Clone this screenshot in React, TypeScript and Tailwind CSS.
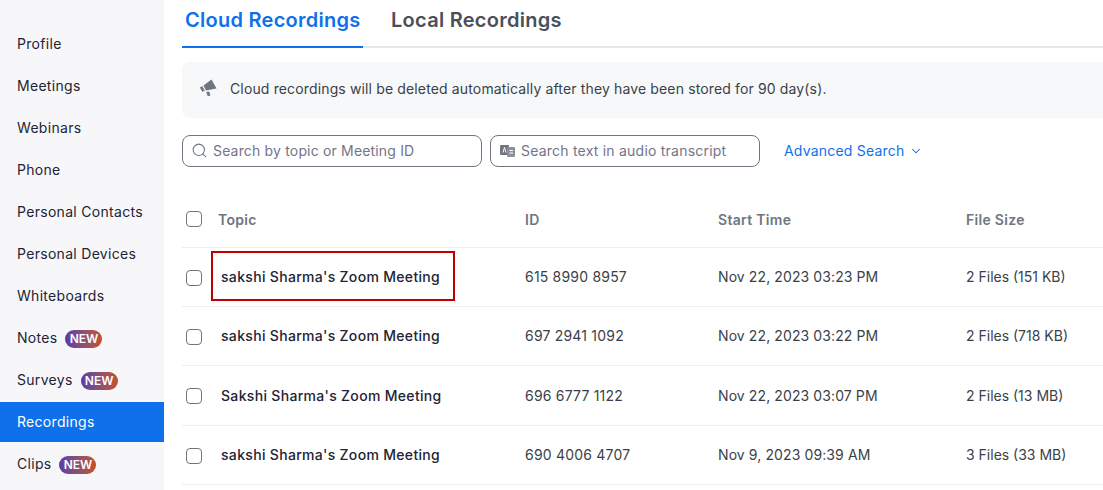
import React from "react";
import { Search, ChevronDown } from "lucide-react";

const nav: [string, boolean][] = [
  ["Profile", false],
  ["Meetings", false],
  ["Webinars", false],
  ["Phone", false],
  ["Personal Contacts", false],
  ["Personal Devices", false],
  ["Whiteboards", false],
  ["Notes", true],
  ["Surveys", true],
  ["Recordings", false],
  ["Clips", true],
];

const rows = [
  { t: "sakshi Sharma's Zoom Meeting", id: "615 8990 8957", s: "Nov 22, 2023 03:23 PM", f: "2 Files (151 KB)", h: "h-[59px]", mark: true },
  { t: "sakshi Sharma's Zoom Meeting", id: "697 2941 1092", s: "Nov 22, 2023 03:22 PM", f: "2 Files (718 KB)", h: "h-[59px]", mark: false },
  { t: "Sakshi Sharma's Zoom Meeting", id: "696 6777 1122", s: "Nov 22, 2023 03:07 PM", f: "2 Files (13 MB)", h: "h-[60px]", mark: false },
  { t: "sakshi Sharma's Zoom Meeting", id: "690 4006 4707", s: "Nov 9, 2023 09:39 AM", f: "3 Files (33 MB)", h: "h-[59px]", mark: false },
];

function Box() {
  return <span className="block w-[16px] h-[16px] rounded-[4px] border border-[#6e7680] bg-white" />;
}

export default function App() {
  return (
    <div className="flex w-[1103px] h-[490px] overflow-hidden bg-white font-['Inter',sans-serif] text-[14px] text-[#232333]">
      <aside className="w-[164px] shrink-0 bg-[#f7f7fa] pt-[24px] flex flex-col gap-[2px]">
        {nav.map(([label, isNew]) => (
          <div
            key={label}
            className={
              "h-[40px] shrink-0 flex items-center pl-[17px] pb-[1px] gap-[8px] " +
              (label === "Recordings" ? "bg-[#0e71eb] text-white" : "text-[#232333]")
            }
          >
            <span className="tracking-[0.3px]">{label}</span>
            {isNew && (
              <span className="mt-[2px] h-[18px] w-[37px] rounded-full bg-gradient-to-r from-[#5b3aa8] to-[#c4501b] text-white text-[12px] font-semibold flex items-center justify-center">
                NEW
              </span>
            )}
          </div>
        ))}
      </aside>

      <main className="relative flex-1 min-w-0 pl-[18px]">
        <div className="h-[48px] flex border-b-2 border-[#e4e7ec] w-[1000px] tracking-[0.27px]">
          <div className="h-[48px] w-[181px] border-b-2 border-[#0e71eb] pl-[3px] pt-[6px] text-[20px] leading-[28px] font-semibold text-[#0e71eb]">
            Cloud Recordings
          </div>
          <div className="pl-[28px] pt-[6px] text-[20px] leading-[28px] font-semibold text-[#4a4f5a]">
            Local Recordings
          </div>
        </div>

        <div className="mt-[14px] h-[56px] w-[1000px] rounded-[8px] bg-[#f7f8fa] flex items-center pl-[17px] pb-[5px] gap-[13px] text-[#3a3f49] tracking-[0.14px]">
          <svg width="18" height="18" viewBox="0 0 18 18" className="shrink-0">
            <path d="M12.5 0.5 L17.5 9.5 L7 11.5 L4.5 6.5 Z" fill="#6e7680" />
            <path d="M3.4 7.2 L5.8 11.8 L3.4 12.8 L0.8 8.6 Z" fill="#6e7680" />
            <path d="M7.2 13 L10.2 12.4 L11.4 16.4 L8.8 17.2 Z" fill="#6e7680" />
          </svg>
          <span className="mt-[2px]">Cloud recordings will be deleted automatically after they have been stored for 90 day(s).</span>
        </div>

        <div className="mt-[17px] flex items-center h-[32px]">
          <div className="w-[300px] h-[32px] rounded-[8px] border border-[#6e7680] flex items-center pl-[8px] pb-[1px] gap-[5px] text-[#747487] tracking-[0.17px]">
            <Search size={17} strokeWidth={1.5} className="text-[#6e7680]" />
            <span>Search by topic or Meeting ID</span>
          </div>
          <div className="ml-[8px] w-[270px] h-[32px] rounded-[8px] border border-[#6e7680] flex items-center pl-[9px] pb-[1px] gap-[6px] text-[#747487] tracking-[0.22px]">
            <svg width="15" height="12" viewBox="0 0 15 12" className="shrink-0">
              <rect x="0" y="0" width="9" height="10" rx="1" fill="#6e7680" />
              <rect x="7" y="2" width="8" height="10" rx="1" fill="#8b9099" />
              <path d="M3 7.5 L4.5 2.5 L6 7.5" stroke="#fff" strokeWidth="1" fill="none" />
              <path d="M9.5 5.5h3.5M9.5 8h3.5" stroke="#fff" strokeWidth="1" />
            </svg>
            <span>Search text in audio transcript</span>
          </div>
          <div className="ml-[24px] pb-[1px] flex items-center gap-[5px] text-[#0e71eb] tracking-[0.2px]">
            <span>Advanced Search</span>
            <ChevronDown size={14} strokeWidth={1.8} />
          </div>
        </div>

        <div className="mt-[24px] h-[57px] flex items-center border-b border-[#ededf4] w-[1000px] font-semibold text-[#6e7680] text-[14px] tracking-[0.3px]">
          <div className="w-[36px] pl-[4px]"><Box /></div>
          <div className="w-[307px]">Topic</div>
          <div className="w-[193px]">ID</div>
          <div className="w-[248px]">Start Time</div>
          <div>File Size</div>
        </div>

        {rows.map((r, i) => (
          <div key={i} className={"relative flex items-center border-b border-[#ededf4] w-[1000px] " + r.h}>
            <div className="w-[39px] pl-[4px] pt-[1px]"><Box /></div>
            <div className="w-[304px] font-[550] tracking-[0.32px] pb-[1px]">{r.t}</div>
            <div className="w-[193px] text-[#3a3f49] tracking-[0.2px] pb-[1px]">{r.id}</div>
            <div className="w-[248px] text-[#3a3f49] tracking-[0.1px] pb-[1px]">{r.s}</div>
            <div className="text-[#3a3f49] pb-[1px]">{r.f}</div>
            {r.mark && (
              <div className="absolute left-[29px] top-[3px] w-[244px] h-[50px] border-2 border-[#c00000]" />
            )}
          </div>
        ))}
      </main>
    </div>
  );
}
